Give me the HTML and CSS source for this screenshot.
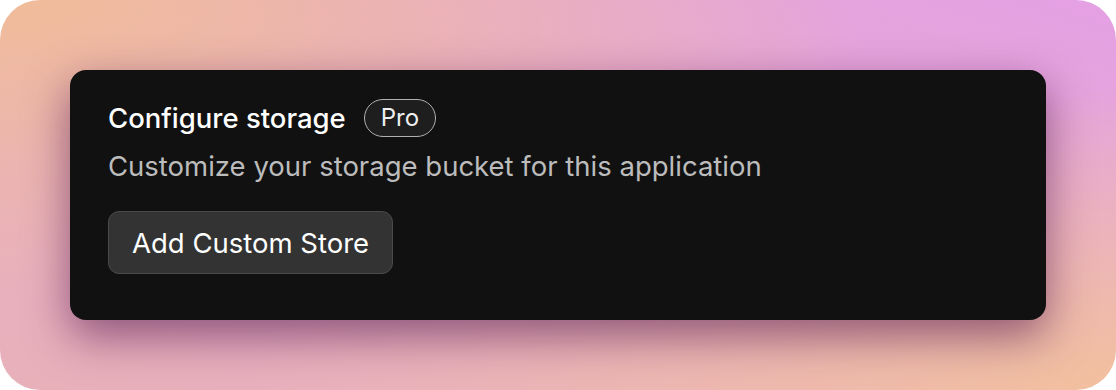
FILE: index.html
```html
<!DOCTYPE html>
<html lang="en">
<head>
    <meta charset="UTF-8">
    <meta name="viewport" content="width=device-width, initial-scale=1.0">
    <title>Configure storage</title>
    <link rel="stylesheet" href="styles.css">
</head>
<body>
    <div class="moldura">
        <section class="cartao">
            <header class="cabecalho">
                <h1>Configure storage</h1>
                <span class="selo">Pro</span>
            </header>
            <p class="descricao">Customize your storage bucket for this application</p>
            <button class="botao">Add Custom Store</button>
        </section>
    </div>
</body>
</html>
```

FILE: styles.css
```css
/* fundo branco com a moldura em gradiente */
body {
    margin: 0;
    background-color: #ffffff;
    font-family: Inter, "Noto Sans", sans-serif;
}

.moldura {
    width: 1116px;
    height: 390px;
    box-sizing: border-box;
    padding: 70px;
    border-radius: 40px;
    background:
        radial-gradient(ellipse at 0% 0%, #f0bc98 0%, rgba(240, 188, 152, 0) 55%),
        radial-gradient(ellipse at 100% 100%, #f2c09e 0%, rgba(242, 192, 158, 0) 55%),
        linear-gradient(to bottom left, #e4a0e4 0%, #e8aec8 60%, #e8b0b8 100%);
}

.cartao {
    height: 250px;
    box-sizing: border-box;
    padding: 28px 38px;
    background-color: #111111;
    border-radius: 16px;
    box-shadow: 0 16px 44px rgba(70, 10, 70, 0.55);
    color: #ffffff;
}

.cabecalho {
    display: flex;
    align-items: center;
    gap: 18px;
}

.cabecalho h1 {
    margin: 0;
    font-size: 27.5px;
    font-weight: 500;
    line-height: 40px;
}

.selo {
    display: inline-block;
    padding: 0 16px;
    height: 36px;
    line-height: 36px;
    border: 1.5px solid #b0b0b0;
    border-radius: 20px;
    background-color: #1e1e1e;
    font-size: 24px;
    color: #f0f0f0;
}

.descricao {
    margin: 10px 0 0 0;
    font-size: 27.5px;
    line-height: 36px;
    color: #bcbcbc;
}

.botao {
    margin-top: 27px;
    padding: 0 23px;
    height: 63px;
    background-color: #333333;
    border: 1px solid #4a4a4a;
    border-radius: 11px;
    font-family: inherit;
    font-size: 27.5px;
    color: #ffffff;
}
```
